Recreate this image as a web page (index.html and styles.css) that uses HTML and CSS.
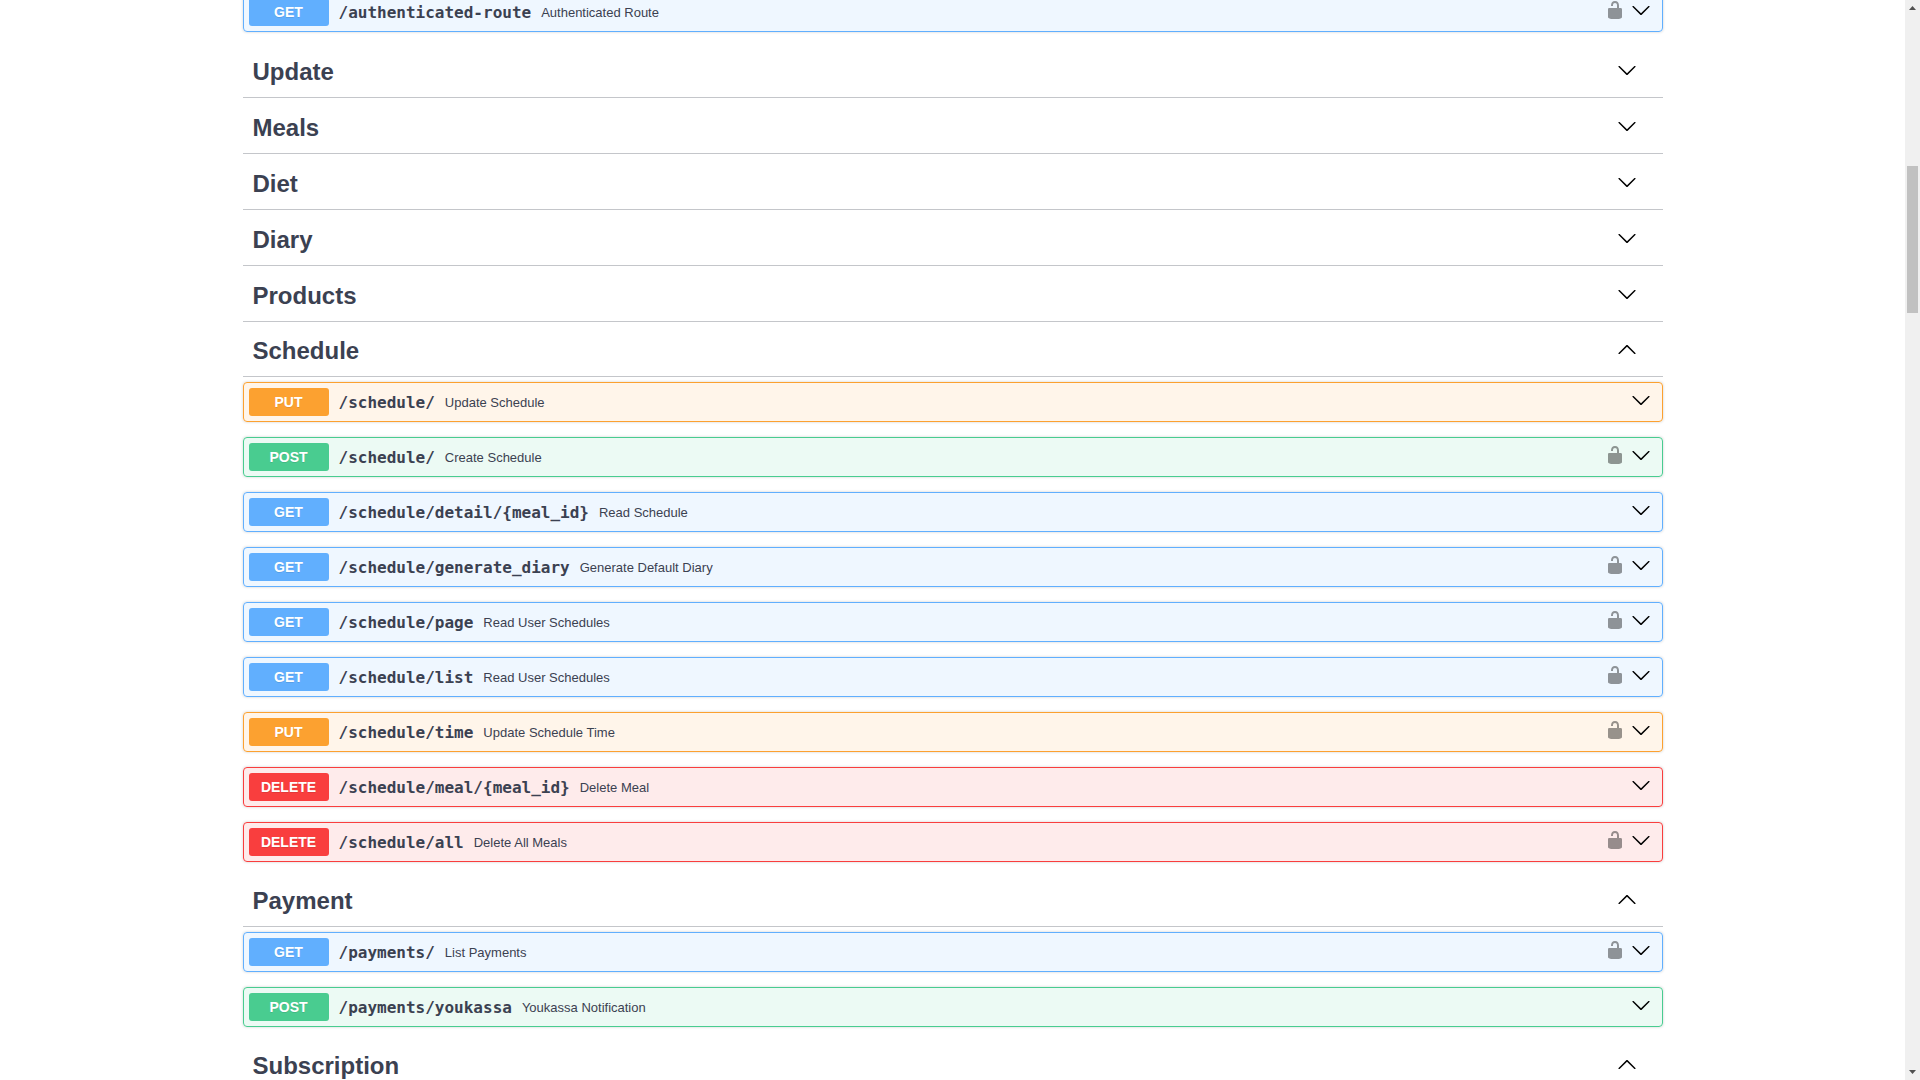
FILE: index.html
```html
<!DOCTYPE html>
<html lang="en">
<head>
  <meta charset="UTF-8">
  <meta name="viewport" content="width=device-width, initial-scale=1.0">
  <title>Swagger UI</title>
  <link rel="stylesheet" href="styles.css">
</head>
<body>
  <!-- icons -->
  <svg class="sprite" aria-hidden="true">
    <symbol id="arrow-down" viewBox="0 0 20 20">
      <path d="M17.418 6.109c.272-.268.709-.268.979 0s.271.701 0 .969l-7.908 7.83c-.27.268-.707.268-.979 0l-7.908-7.83c-.27-.268-.27-.701 0-.969.271-.268.709-.268.979 0L10 13.25l7.418-7.141z"/>
    </symbol>
    <symbol id="arrow-up" viewBox="0 0 20 20">
      <path d="M17.418 14.908c.272.268.709.268.979 0s.271-.701 0-.969l-7.908-7.83c-.27-.268-.707-.268-.979 0l-7.908 7.83c-.27.268-.27.701 0 .969.271.268.709.268.979 0L10 7.767l7.418 7.141z"/>
    </symbol>
    <symbol id="unlocked" viewBox="0 0 20 20">
      <path d="M15.8 8H14V5.6C14 2.703 12.665 1 10 1 7.334 1 6 2.703 6 5.6V6h2v-.801C8 3.754 8.797 3 10 3c1.203 0 2 .754 2 2.199V8H4c-.553 0-1 .646-1 1.199V17c0 .549.428 1.139.951 1.307l1.197.387C5.672 18.861 6.55 19 7.1 19h5.8c.549 0 1.428-.139 1.951-.307l1.196-.387c.524-.167.953-.757.953-1.306V9.199C17 8.646 16.352 8 15.8 8z"/>
    </symbol>
  </svg>

  <div class="viewport">
    <main class="wrapper">
      <section class="tag-section">
        <div class="opblock get">
          <button class="summary"><span class="method">GET</span><span class="path">/authenticated-route</span><span class="description">Authenticated Route</span></button>
          <button class="lock" aria-label="Authorize"><svg><use href="#unlocked"/></svg></button>
          <button class="arrow" aria-label="Expand"><svg><use href="#arrow-down"/></svg></button>
        </div>
      </section>

      <section class="tag-section">
        <div class="tag">
          <h3>Update</h3>
          <button class="arrow" aria-label="Expand Update"><svg><use href="#arrow-down"/></svg></button>
        </div>
      </section>

      <section class="tag-section">
        <div class="tag">
          <h3>Meals</h3>
          <button class="arrow" aria-label="Expand Meals"><svg><use href="#arrow-down"/></svg></button>
        </div>
      </section>

      <section class="tag-section">
        <div class="tag">
          <h3>Diet</h3>
          <button class="arrow" aria-label="Expand Diet"><svg><use href="#arrow-down"/></svg></button>
        </div>
      </section>

      <section class="tag-section">
        <div class="tag">
          <h3>Diary</h3>
          <button class="arrow" aria-label="Expand Diary"><svg><use href="#arrow-down"/></svg></button>
        </div>
      </section>

      <section class="tag-section">
        <div class="tag">
          <h3>Products</h3>
          <button class="arrow" aria-label="Expand Products"><svg><use href="#arrow-down"/></svg></button>
        </div>
      </section>

      <!-- Schedule -->
      <section class="tag-section is-open">
        <div class="tag">
          <h3>Schedule</h3>
          <button class="arrow" aria-label="Collapse Schedule"><svg><use href="#arrow-up"/></svg></button>
        </div>
        <div class="opblock put">
          <button class="summary"><span class="method">PUT</span><span class="path">/schedule/</span><span class="description">Update Schedule</span></button>
          <button class="arrow" aria-label="Expand"><svg><use href="#arrow-down"/></svg></button>
        </div>
        <div class="opblock post">
          <button class="summary"><span class="method">POST</span><span class="path">/schedule/</span><span class="description">Create Schedule</span></button>
          <button class="lock" aria-label="Authorize"><svg><use href="#unlocked"/></svg></button>
          <button class="arrow" aria-label="Expand"><svg><use href="#arrow-down"/></svg></button>
        </div>
        <div class="opblock get">
          <button class="summary"><span class="method">GET</span><span class="path">/schedule/detail/{meal_id}</span><span class="description">Read Schedule</span></button>
          <button class="arrow" aria-label="Expand"><svg><use href="#arrow-down"/></svg></button>
        </div>
        <div class="opblock get">
          <button class="summary"><span class="method">GET</span><span class="path">/schedule/generate_diary</span><span class="description">Generate Default Diary</span></button>
          <button class="lock" aria-label="Authorize"><svg><use href="#unlocked"/></svg></button>
          <button class="arrow" aria-label="Expand"><svg><use href="#arrow-down"/></svg></button>
        </div>
        <div class="opblock get">
          <button class="summary"><span class="method">GET</span><span class="path">/schedule/page</span><span class="description">Read User Schedules</span></button>
          <button class="lock" aria-label="Authorize"><svg><use href="#unlocked"/></svg></button>
          <button class="arrow" aria-label="Expand"><svg><use href="#arrow-down"/></svg></button>
        </div>
        <div class="opblock get">
          <button class="summary"><span class="method">GET</span><span class="path">/schedule/list</span><span class="description">Read User Schedules</span></button>
          <button class="lock" aria-label="Authorize"><svg><use href="#unlocked"/></svg></button>
          <button class="arrow" aria-label="Expand"><svg><use href="#arrow-down"/></svg></button>
        </div>
        <div class="opblock put">
          <button class="summary"><span class="method">PUT</span><span class="path">/schedule/time</span><span class="description">Update Schedule Time</span></button>
          <button class="lock" aria-label="Authorize"><svg><use href="#unlocked"/></svg></button>
          <button class="arrow" aria-label="Expand"><svg><use href="#arrow-down"/></svg></button>
        </div>
        <div class="opblock delete">
          <button class="summary"><span class="method">DELETE</span><span class="path">/schedule/meal/{meal_id}</span><span class="description">Delete Meal</span></button>
          <button class="arrow" aria-label="Expand"><svg><use href="#arrow-down"/></svg></button>
        </div>
        <div class="opblock delete">
          <button class="summary"><span class="method">DELETE</span><span class="path">/schedule/all</span><span class="description">Delete All Meals</span></button>
          <button class="lock" aria-label="Authorize"><svg><use href="#unlocked"/></svg></button>
          <button class="arrow" aria-label="Expand"><svg><use href="#arrow-down"/></svg></button>
        </div>
      </section>

      <!-- Payment -->
      <section class="tag-section is-open">
        <div class="tag">
          <h3>Payment</h3>
          <button class="arrow" aria-label="Collapse Payment"><svg><use href="#arrow-up"/></svg></button>
        </div>
        <div class="opblock get">
          <button class="summary"><span class="method">GET</span><span class="path">/payments/</span><span class="description">List Payments</span></button>
          <button class="lock" aria-label="Authorize"><svg><use href="#unlocked"/></svg></button>
          <button class="arrow" aria-label="Expand"><svg><use href="#arrow-down"/></svg></button>
        </div>
        <div class="opblock post">
          <button class="summary"><span class="method">POST</span><span class="path">/payments/youkassa</span><span class="description">Youkassa Notification</span></button>
          <button class="arrow" aria-label="Expand"><svg><use href="#arrow-down"/></svg></button>
        </div>
      </section>

      <section class="tag-section is-open">
        <div class="tag">
          <h3>Subscription</h3>
          <button class="arrow" aria-label="Collapse Subscription"><svg><use href="#arrow-up"/></svg></button>
        </div>
      </section>
    </main>
  </div>

  <div class="scrollbar" aria-hidden="true">
    <svg viewBox="0 0 15 16"><path d="M4 10L7.500 6L11 10z"/></svg>
    <div class="track"><div class="thumb"></div></div>
    <svg viewBox="0 0 15 16"><path d="M4 6L7.500 10L11 6z"/></svg>
  </div>
</body>
</html>
```
FILE: styles.css
```css
* {
  box-sizing: border-box;
}
body {
  margin: 0;
  display: flex;
  height: 100vh;
  overflow: hidden;
  background: #fff;
  color: #3b4151;
  font-family: "Liberation Sans", Arial, sans-serif;
}
.sprite {
  display: none;
}
.viewport {
  flex: 1;
  overflow: hidden;
}
.wrapper {
  max-width: 1460px;
  /* page is scrolled part way into the first row */
  margin: -8px auto 0;
  padding: 0 20px;
}
button {
  margin: 0;
  padding: 0;
  border: none;
  background: none;
  color: inherit;
  font-family: inherit;
  cursor: pointer;
}

/* tags */
.tag {
  display: flex;
  align-items: center;
  margin-bottom: 5px;
  padding: 10px 20px 10px 10px;
  border-bottom: 1px solid rgba(59, 65, 81, 0.3);
}
.is-open .tag {
  padding-top: 9px;
}
.tag h3 {
  flex: 1;
  margin: 0;
  font-size: 24px;
  line-height: 30px;
}

/* operations */
.opblock {
  display: flex;
  align-items: center;
  margin-bottom: 15px;
  padding: 5px;
  border: 1px solid;
  border-radius: 4px;
  box-shadow: 0 0 3px rgba(0, 0, 0, 0.19);
}
.summary {
  flex: 1;
  display: flex;
  align-items: center;
  text-align: left;
}
.method {
  width: 80px;
  border-radius: 3px;
  color: #fff;
  font-size: 14px;
  font-weight: 700;
  line-height: 28px;
  text-align: center;
  text-shadow: 0 1px 0 rgba(0, 0, 0, 0.1);
}
.path {
  padding: 0 10px;
  font-family: "DejaVu Sans Mono", monospace;
  font-size: 16px;
  font-weight: 600;
}
.description {
  font-size: 13px;
}
.arrow,
.lock {
  display: flex;
  padding-bottom: 4px;
}
.arrow {
  padding-left: 6px;
  padding-right: 6px;
}
.arrow svg,
.lock svg {
  width: 20px;
  height: 20px;
}
.arrow svg {
  fill: #000;
}
.lock svg {
  opacity: 0.4;
}

.get {
  border-color: #61affe;
  background: rgba(97, 175, 254, 0.1);
}
.get .method {
  background: #61affe;
}
.post {
  border-color: #49cc90;
  background: rgba(73, 204, 144, 0.1);
}
.post .method {
  background: #49cc90;
}
.put {
  border-color: #fca130;
  background: rgba(252, 161, 48, 0.1);
}
.put .method {
  background: #fca130;
}
.delete {
  border-color: #f93e3e;
  background: rgba(249, 62, 62, 0.1);
}
.delete .method {
  background: #f93e3e;
}

/* scrollbar */
.scrollbar {
  display: flex;
  flex-direction: column;
  width: 15px;
  background: #f0f0f0;
}
.scrollbar svg {
  width: 15px;
  height: 16px;
  fill: #505050;
}
.track {
  flex: 1;
  padding: 150px 2px 0;
}
.thumb {
  height: 147px;
  background: #c1c1c1;
}
```
